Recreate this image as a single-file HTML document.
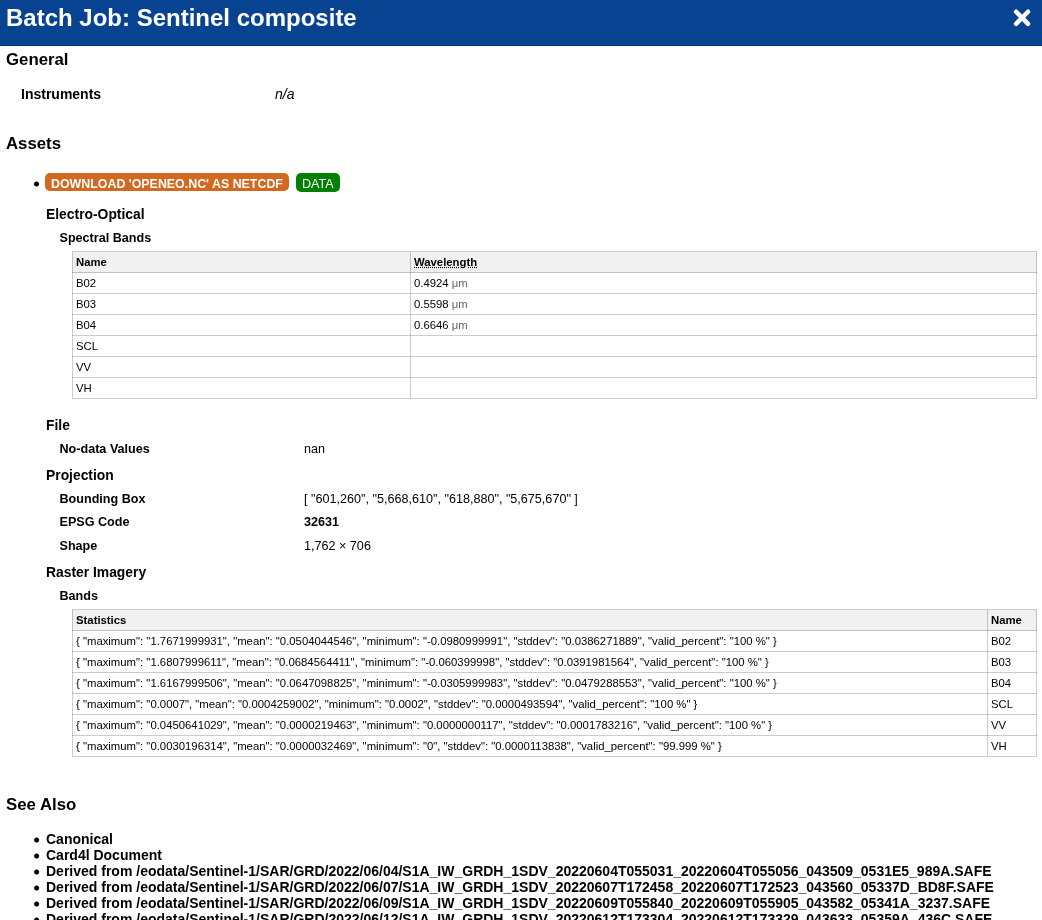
<!DOCTYPE html>
<html><head><meta charset="utf-8">
<style>
html,body{margin:0;padding:0;background:#fff;color:#000;font-family:"Liberation Sans",sans-serif;width:1042px;height:920px;overflow:hidden;position:relative}
div,span{line-height:1}
#wrap{position:absolute;left:0;top:0;width:1042px;height:920px;will-change:transform}
.t{position:absolute;white-space:nowrap;line-height:1}
.b{font-weight:bold}
.hdr{position:absolute;left:0;top:0;width:1042px;height:45px;background:#084391;border-bottom:1px solid #033389}
.s24{font-size:24px} .s17{font-size:16.8px} .s14{font-size:14px} .s139{font-size:13.86px} .s126{font-size:12.6px} .s113{font-size:11.34px}
.hl{position:absolute;left:0;height:1px;background:rgba(0,0,0,.2)}
.vl{position:absolute;width:1px;background:rgba(0,0,0,.2)}
.thbg{position:absolute;background:#f1f1f1}
.unit{color:#666}
abbr{text-decoration:underline dotted;}
.badge{position:absolute;border-radius:5px}
</style></head><body><div id="wrap">
<div class="hdr"></div>
<div class="t s24 b" style="left:6px;top:6px;color:#fff">Batch Job: Sentinel composite</div>
<svg style="position:absolute;left:1000px;top:0" width="42" height="40" viewBox="0 0 42 40"><path d="M16.1 11.75L28.0 23.8M28.0 11.75L16.1 23.8" stroke="#fff" stroke-width="4.5" stroke-linecap="round"/></svg>
<div class="t s17 b" style="left:6px;top:52px">General</div>
<div class="t s14 b" style="left:21px;top:87px">Instruments</div>
<div class="t s14" style="left:275px;top:87px;font-style:italic">n/a</div>
<div class="t s17 b" style="left:6px;top:136px">Assets</div>
<svg style="position:absolute;left:0;top:0" width="60" height="920"><circle cx="36.5" cy="184" r="2.5" fill="#000"/>
<circle cx="36.6" cy="840" r="2.5" fill="#000"/>
<circle cx="36.6" cy="856" r="2.5" fill="#000"/>
<circle cx="36.6" cy="872" r="2.5" fill="#000"/>
<circle cx="36.6" cy="888" r="2.5" fill="#000"/>
<circle cx="36.6" cy="904" r="2.5" fill="#000"/>
<circle cx="36.6" cy="920" r="2.5" fill="#000"/>
</svg>
<div class="badge" style="left:45px;top:173px;width:244px;height:18px;background:#d2691e"></div>
<div class="t b" style="font-size:12.4px;left:51px;top:178px;color:#fff">DOWNLOAD 'OPENEO.NC' AS NETCDF</div>
<div class="badge" style="left:296px;top:173px;width:44px;height:19px;background:#008000"></div>
<div class="t s126" style="left:302px;top:178px;color:#fff">DATA</div>
<div class="t s139 b" style="left:46px;top:208px">Electro-Optical</div>
<div class="t s126 b" style="left:59.5px;top:232px">Spectral Bands</div>

<div style="position:absolute;left:72px;top:251px;width:965px;height:148px">
<div class="thbg" style="left:0;top:1px;width:965px;height:21px"></div>
<div style="position:absolute;left:0;top:0;width:965px;height:148px;box-sizing:border-box;border:1px solid rgba(0,0,0,.2)"></div>
<div class="hl" style="top:21px;width:965px"></div>
<div class="hl" style="top:42px;width:965px"></div>
<div class="hl" style="top:63px;width:965px"></div>
<div class="hl" style="top:84px;width:965px"></div>
<div class="hl" style="top:105px;width:965px"></div>
<div class="hl" style="top:126px;width:965px"></div>
<div class="vl" style="left:338px;top:1px;height:146px"></div>
</div>
<div class="t s113 b" style="left:76px;top:257px">Name</div>
<div class="t s113 b" style="left:414px;top:257px"><abbr>Wavelength</abbr></div>
<div class="t s113" style="left:76px;top:278px">B02</div>
<div class="t s113" style="left:414px;top:278px">0.4924 <span class="unit">μm</span></div>
<div class="t s113" style="left:76px;top:299px">B03</div>
<div class="t s113" style="left:414px;top:299px">0.5598 <span class="unit">μm</span></div>
<div class="t s113" style="left:76px;top:320px">B04</div>
<div class="t s113" style="left:414px;top:320px">0.6646 <span class="unit">μm</span></div>
<div class="t s113" style="left:76px;top:341px">SCL</div>
<div class="t s113" style="left:76px;top:362px">VV</div>
<div class="t s113" style="left:76px;top:383px">VH</div>

<div class="t s139 b" style="left:46px;top:419px">File</div>
<div class="t s126 b" style="left:59.5px;top:443px">No-data Values</div>
<div class="t s126" style="left:304px;top:443px">nan</div>
<div class="t s139 b" style="left:46px;top:469px">Projection</div>
<div class="t s126 b" style="left:59.5px;top:493px">Bounding Box</div>
<div class="t s126" style="left:304px;top:493px">[ "601,260", "5,668,610", "618,880", "5,675,670" ]</div>
<div class="t s126 b" style="left:59.5px;top:516px">EPSG Code</div>
<div class="t s126 b" style="left:304px;top:516px">32631</div>
<div class="t s126 b" style="left:59.5px;top:540px">Shape</div>
<div class="t s126" style="left:304px;top:540px">1,762 × 706</div>
<div class="t s139 b" style="left:46px;top:566px">Raster Imagery</div>
<div class="t s126 b" style="left:59.5px;top:590px">Bands</div>

<div style="position:absolute;left:72px;top:609px;width:965px;height:148px">
<div class="thbg" style="left:0;top:1px;width:965px;height:21px"></div>
<div style="position:absolute;left:0;top:0;width:965px;height:148px;box-sizing:border-box;border:1px solid rgba(0,0,0,.2)"></div>
<div class="hl" style="top:21px;width:965px"></div>
<div class="hl" style="top:42px;width:965px"></div>
<div class="hl" style="top:63px;width:965px"></div>
<div class="hl" style="top:84px;width:965px"></div>
<div class="hl" style="top:105px;width:965px"></div>
<div class="hl" style="top:126px;width:965px"></div>
<div class="vl" style="left:915px;top:1px;height:146px"></div>
</div>
<div class="t s113 b" style="left:76px;top:615px">Statistics</div>
<div class="t s113 b" style="left:991px;top:615px">Name</div>
<div class="t s113" style="left:76px;top:636px">{ "maximum": "1.7671999931", "mean": "0.0504044546", "minimum": "-0.0980999991", "stddev": "0.0386271889", "valid_percent": "100 %" }</div>
<div class="t s113" style="left:991px;top:636px">B02</div>
<div class="t s113" style="left:76px;top:657px">{ "maximum": "1.6807999611", "mean": "0.0684564411", "minimum": "-0.060399998", "stddev": "0.0391981564", "valid_percent": "100 %" }</div>
<div class="t s113" style="left:991px;top:657px">B03</div>
<div class="t s113" style="left:76px;top:678px">{ "maximum": "1.6167999506", "mean": "0.0647098825", "minimum": "-0.0305999983", "stddev": "0.0479288553", "valid_percent": "100 %" }</div>
<div class="t s113" style="left:991px;top:678px">B04</div>
<div class="t s113" style="left:76px;top:699px">{ "maximum": "0.0007", "mean": "0.0004259002", "minimum": "0.0002", "stddev": "0.0000493594", "valid_percent": "100 %" }</div>
<div class="t s113" style="left:991px;top:699px">SCL</div>
<div class="t s113" style="left:76px;top:720px">{ "maximum": "0.0450641029", "mean": "0.0000219463", "minimum": "0.0000000117", "stddev": "0.0001783216", "valid_percent": "100 %" }</div>
<div class="t s113" style="left:991px;top:720px">VV</div>
<div class="t s113" style="left:76px;top:741px">{ "maximum": "0.0030196314", "mean": "0.0000032469", "minimum": "0", "stddev": "0.0000113838", "valid_percent": "99.999 %" }</div>
<div class="t s113" style="left:991px;top:741px">VH</div>
<div class="t s17 b" style="left:6px;top:797px">See Also</div>
<div class="t s14 b" style="left:46px;top:832px">Canonical</div>
<div class="t s14 b" style="left:46px;top:848px">Card4l Document</div>
<div class="t s14 b" style="left:46px;top:864px">Derived from /eodata/Sentinel-1/SAR/GRD/2022/06/04/S1A_IW_GRDH_1SDV_20220604T055031_20220604T055056_043509_0531E5_989A.SAFE</div>
<div class="t s14 b" style="left:46px;top:880px">Derived from /eodata/Sentinel-1/SAR/GRD/2022/06/07/S1A_IW_GRDH_1SDV_20220607T172458_20220607T172523_043560_05337D_BD8F.SAFE</div>
<div class="t s14 b" style="left:46px;top:896px">Derived from /eodata/Sentinel-1/SAR/GRD/2022/06/09/S1A_IW_GRDH_1SDV_20220609T055840_20220609T055905_043582_05341A_3237.SAFE</div>
<div class="t s14 b" style="left:46px;top:912px">Derived from /eodata/Sentinel-1/SAR/GRD/2022/06/12/S1A_IW_GRDH_1SDV_20220612T173304_20220612T173329_043633_05359A_436C.SAFE</div>
</div></body></html>
